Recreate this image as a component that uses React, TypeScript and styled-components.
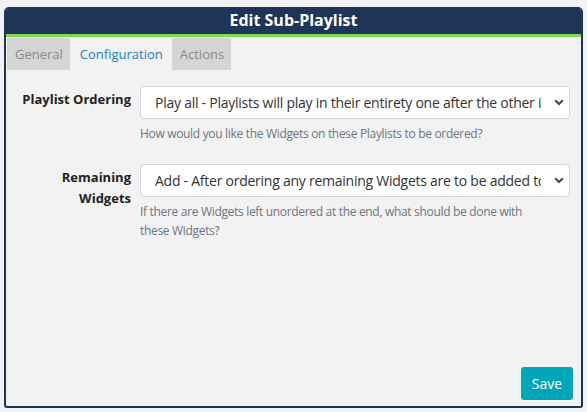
import React from "react";
import styled, { createGlobalStyle } from "styled-components";

const Global = createGlobalStyle`
  html, body { margin: 0; padding: 0; background: #f2f2f2; }
  body { font-family: "Open Sans", "Noto Sans", sans-serif; }
  * { box-sizing: border-box; }
`;

const Dialog = styled.div`
  margin: 7px 0 0 4px;
  width: 579px;
  height: 401px;
  border: 2px solid #1f3557;
  border-top: none;
  border-radius: 5px 5px 3px 3px;
  background: #f2f2f2;
  display: flex;
  flex-direction: column;
  overflow: hidden;
`;

const Header = styled.div`
  height: 30px;
  background: #1f3557;
  border-bottom: 3px solid #7ed957;
  margin: 0 -2px;
  display: flex;
  align-items: center;
  justify-content: center;
  color: #fff;
  font-weight: 700;
  font-size: 16px;
  padding-bottom: 2px;
`;

const Tabs = styled.div`
  display: flex;
  margin: 1px 0 0 1px;
  height: 32px;
`;

const Tab = styled.div<{ $active?: boolean }>`
  padding: ${(p) => (p.$active ? "0 9px 0 10px" : "0 7px 0 8px")};
  display: flex;
  align-items: center;
  font-size: 13px;
  background: ${(p) => (p.$active ? "transparent" : "#d5d5d5")};
  color: ${(p) => (p.$active ? "#1b7fc4" : "#8a8a8a")};
`;

const Form = styled.div`
  display: grid;
  grid-template-columns: 125px minmax(0, 1fr);
  column-gap: 9px;
  row-gap: 21px;
  padding: 16px 11px 0 0;
  flex: 1;
  align-content: start;
`;

const Label = styled.label`
  text-align: right;
  font-weight: 700;
  font-size: 13px;
  color: #222;
  line-height: 21px;
  padding-top: 3px;
`;

const Field = styled.div`
  display: flex;
  flex-direction: column;
  min-width: 0;
`;

const SelectBox = styled.div`
  height: 33px;
  background: #fff;
  border: 1px solid #ced4da;
  border-radius: 4px;
  display: flex;
  align-items: center;
  padding: 0 5px 0 14px;
  font-size: 14px;
  letter-spacing: -0.25px;
  color: #333;
`;

const SelectText = styled.span`
  flex: 1;
  min-width: 0;
  white-space: nowrap;
  overflow: hidden;
  margin-right: 13px;
`;

const Help = styled.div`
  margin-top: 5px;
  font-size: 12px;
  letter-spacing: -0.32px;
  color: #6c757d;
  line-height: 19px;
  padding-right: 30px;
`;

const Footer = styled.div`
  display: flex;
  justify-content: flex-end;
  padding: 0 8px 6px 0;
`;

const SaveButton = styled.button`
  background: #00a7b8;
  color: #fff;
  border: none;
  border-radius: 3px;
  height: 33px;
  width: 52px;
  font-family: inherit;
  font-size: 14px;
`;

const Chevron = () => (
  <svg width="10" height="7" viewBox="0 0 10 7">
    <path d="M1.2 1.2 L5 5 L8.8 1.2" fill="none" stroke="#4a4a4a" strokeWidth="2" />
  </svg>
);

export default function App() {
  return (
    <>
      <Global />
      <Dialog>
        <Header>Edit Sub-Playlist</Header>
        <Tabs>
          <Tab>General</Tab>
          <Tab $active>Configuration</Tab>
          <Tab>Actions</Tab>
        </Tabs>
        <Form>
          <Label>Playlist Ordering</Label>
          <Field>
            <SelectBox>
              <SelectText>Play all - Playlists will play in their entirety one after the other in order</SelectText>
              <Chevron />
            </SelectBox>
            <Help>How would you like the Widgets on these Playlists to be ordered?</Help>
          </Field>
          <Label>Remaining<br />Widgets</Label>
          <Field>
            <SelectBox>
              <SelectText>Add - After ordering any remaining Widgets are to be added to the end</SelectText>
              <Chevron />
            </SelectBox>
            <Help>If there are Widgets left unordered at the end, what should be done with these Widgets?</Help>
          </Field>
        </Form>
        <Footer>
          <SaveButton>Save</SaveButton>
        </Footer>
      </Dialog>
    </>
  );
}
